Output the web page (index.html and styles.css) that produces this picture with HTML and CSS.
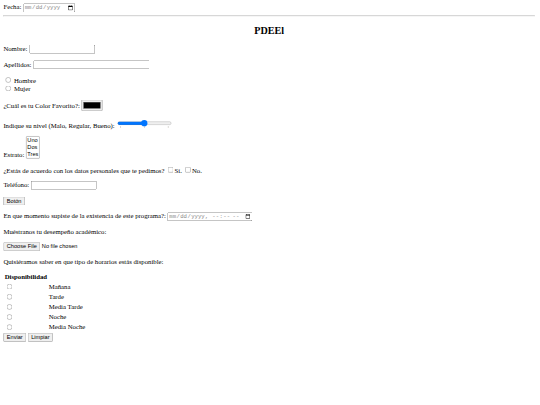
FILE: index.html
```html
<!DOCTYPE html>
<html lang="es">
<head>
<meta charset="utf-8">
<title>PDEEl</title>
<link rel="stylesheet" href="styles.css">
</head>
<body class="page">
<div class="canvas">
Fecha: <input type="date" class="date-field">
<hr>
<h2 class="title">PDEEl</h2>
<form>
<p>Nombre: <input type="text" class="field"></p>
<p>Apellidos: <input type="text" class="field field-wide"></p>
<p><input type="radio" name="sexo"> Hombre<br><input type="radio" name="sexo"> Mujer</p>
<p>¿Cuál es tu Color Favorito?: <input type="color"></p>
<p>Indique su nivel (Malo, Regular, Bueno): <input type="range" min="0" max="2" step="1" value="1" list="niveles">
<datalist id="niveles"><option value="0"></option><option value="1"></option><option value="2"></option></datalist></p>
<p>Estrato: <select size="3"><option>Uno</option><option>Dos</option><option>Tres</option></select></p>
<p>¿Estás de acuerdo con los datos personales que te pedimos? <input type="checkbox">Sí. <input type="checkbox">No.</p>
<p>Teléfono: <input type="tel" class="field"></p>
<p><button type="button">Botón</button></p>
<p>En que momento supiste de la existencia de este programa?: <input type="datetime-local" class="datetime-field"></p>
<p>Muéstranos tu desempeño académico:</p>
<p><input type="file"></p>
<p>Quisiéramos saber en que tipo de horarios estás disponible:</p>
<table>
<tr><th>Disponibilidad</th></tr>
<tr><td><input type="radio" name="h"></td><td>Mañana</td></tr>
<tr><td><input type="radio" name="h"></td><td>Tarde</td></tr>
<tr><td><input type="radio" name="h"></td><td>Media Tarde</td></tr>
<tr><td><input type="radio" name="h"></td><td>Noche</td></tr>
<tr><td><input type="radio" name="h"></td><td>Media Noche</td></tr>
</table>
<input type="submit" value="Enviar"> <input type="reset" value="Limpiar">
</form>
</div>
</body>
</html>
```
FILE: styles.css
```css
html, body {
  margin: 0;
  width: 540px;
  height: 405px;
  overflow: hidden;
}
.page {
  font-family: "Liberation Serif", "Times New Roman", serif;
}
.canvas {
  width: 1276px;
  height: 950px;
  padding: 8px;
  box-sizing: border-box;
  overflow: hidden;
  transform: scale(0.421875);
  transform-origin: 0 0;
}
.title {
  text-align: center;
}
.field {
  width: 156px;
  box-sizing: border-box;
}
.field-wide {
  width: 275px;
}
.date-field,
.datetime-field {
  box-sizing: border-box;
  font-family: "Liberation Mono", "Courier New", monospace;
  color: #8a8a8a;
}
.date-field {
  width: 123px;
}
.datetime-field {
  width: 201px;
}
```
